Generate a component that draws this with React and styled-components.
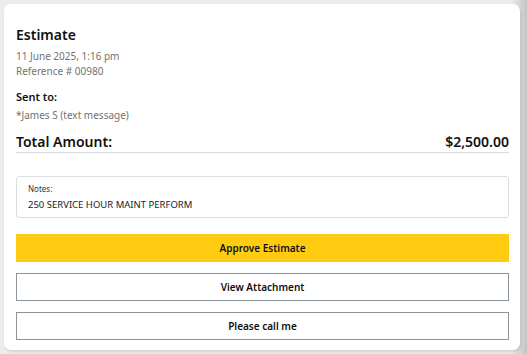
import React from 'react';
import styled, { createGlobalStyle } from 'styled-components';

const GlobalStyle = createGlobalStyle`
  html, body {
    margin: 0;
    padding: 0;
    background: #e9e9ea;
    font-family: "Noto Sans", "Open Sans", sans-serif;
  }
`;

const Page = styled.div`
  width: 527px;
  height: 354px;
  box-sizing: border-box;
  padding: 4px 7px 4px 4px;
  background: linear-gradient(90deg, #ececec 0%, #ececec 97%, #c4c4c4 100%);
`;

const Card = styled.div`
  height: 346px;
  box-sizing: border-box;
  background: #fff;
  border-radius: 7px;
  box-shadow: 1px 2px 3px rgba(0, 0, 0, 0.1);
  padding: 21px 11px 0 12px;
  display: flex;
  flex-direction: column;
`;

const Title = styled.h1`
  margin: 0;
  font-size: 14px;
  font-weight: 600;
  line-height: 20px;
  color: #111;
`;

const Meta = styled.div`
  margin-top: ${p => p.$gap || 4}px;
  font-size: 10px;
  line-height: 15px;
  color: #727272;
`;

const Label = styled.h2`
  margin: 10px 0 0;
  font-size: 11px;
  font-weight: 600;
  line-height: 16px;
  color: #111;
`;

const TotalRow = styled.div`
  margin-top: 9px;
  display: flex;
  justify-content: space-between;
  align-items: baseline;
  font-size: 14px;
  font-weight: 600;
  line-height: 20px;
  color: #111;
  border-bottom: 1px solid #d9dadc;
`;

const Notes = styled.div`
  margin-top: 23px;
  border: 1px solid #dcdde0;
  border-radius: 3px;
  padding: 6px 11px 5px;
`;

const NotesLabel = styled.div`
  font-size: 8px;
  line-height: 12px;
  color: #333;
`;

const NotesText = styled.div`
  margin-top: 3px;
  font-size: 9.5px;
  line-height: 14px;
  color: #1a1a1a;
`;

const Actions = styled.div`
  margin-top: 16px;
  display: flex;
  flex-direction: column;
  gap: 11px;
`;

const Button = styled.button`
  height: 28px;
  box-sizing: border-box;
  width: 100%;
  font-family: inherit;
  font-size: 10px;
  font-weight: 600;
  color: #111;
  border: 1px solid ${p => (p.$primary ? '#ffcc12' : '#8d959c')};
  background: ${p => (p.$primary ? '#ffcc12' : '#fff')};
  border-radius: 0;
  padding: 0;
  cursor: pointer;
`;

export default function App() {
  return (
    <>
      <GlobalStyle />
      <Page>
        <Card>
          <Title>Estimate</Title>
          <Meta>
            11 June 2025, 1:16 pm
            <br />
            Reference # 00980
          </Meta>
          <Label>Sent to:</Label>
          <Meta $gap={3}>*James S (text message)</Meta>
          <TotalRow>
            <span>Total Amount:</span>
            <span>$2,500.00</span>
          </TotalRow>
          <Notes>
            <NotesLabel>Notes:</NotesLabel>
            <NotesText>250 SERVICE HOUR MAINT PERFORM</NotesText>
          </Notes>
          <Actions>
            <Button $primary>Approve Estimate</Button>
            <Button>View Attachment</Button>
            <Button>Please call me</Button>
          </Actions>
        </Card>
      </Page>
    </>
  );
}
